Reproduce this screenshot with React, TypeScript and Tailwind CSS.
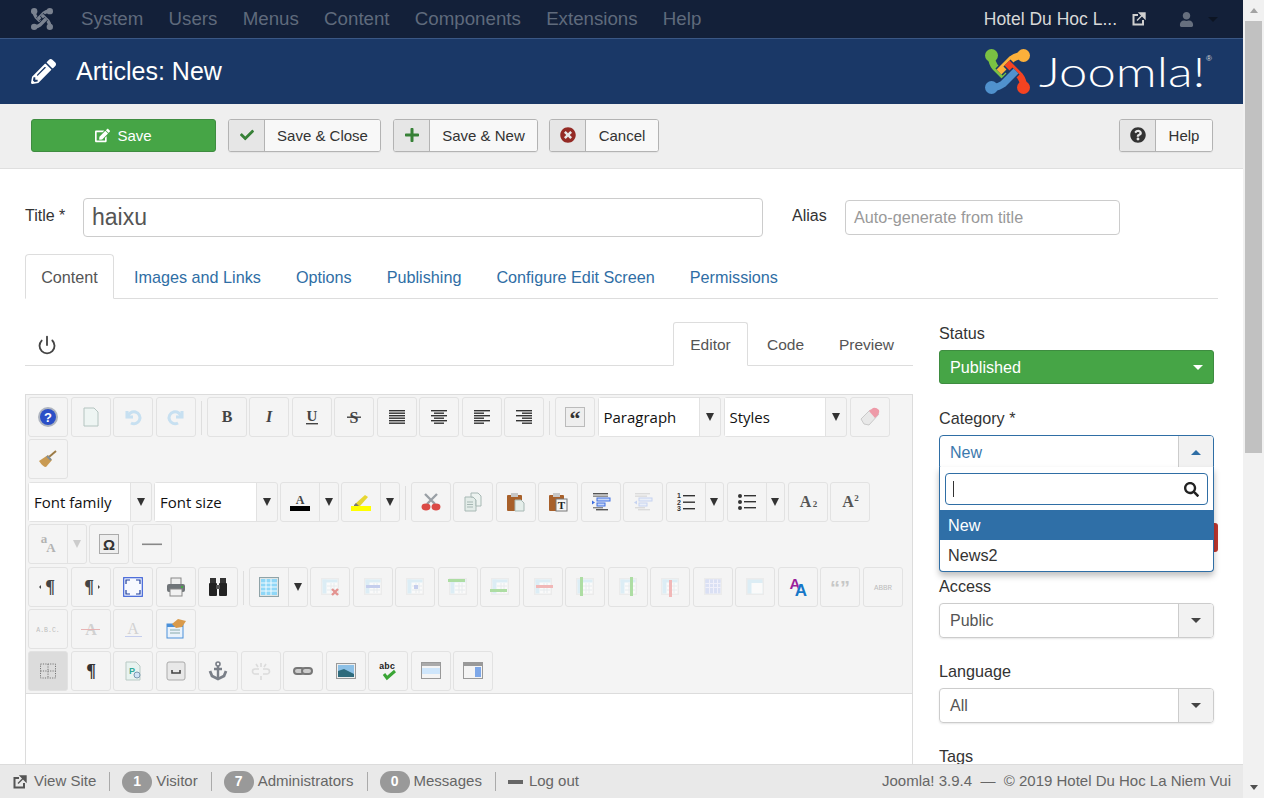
import type { ReactNode } from "react";
import { FaCheck, FaEdit, FaPencilAlt, FaPlus, FaQuestionCircle, FaSearch, FaTimesCircle, FaUser } from "react-icons/fa";
import { Power } from "lucide-react";

const SANS = "font-['Liberation_Sans',Arial,sans-serif]";

const NAV = ["System", "Users", "Menus", "Content", "Components", "Extensions", "Help"];

function JoomlaMark({ colors, size, gap }: { colors: string[]; size: number; gap: string }) {
  return (
    <svg width={size} height={size} viewBox="0 0 45 45">
      {colors.map((c, i) => (
        <g key={i} transform={`rotate(${i * 90} 22.5 22.5)`}>
          <path d="M9 17 L23 31" fill="none" stroke={gap} strokeWidth="10" />
          <circle cx="6.5" cy="6.5" r="6.5" fill={c} />
          <path d="M6 7 Q7 14 10 18 L23 31" fill="none" stroke={c} strokeWidth="7" />
        </g>
      ))}
    </svg>
  );
}

function OutIcon({ className }: { className?: string }) {
  return (
    <svg viewBox="0 0 14 14" className={className}>
      <path d="M6 3H1.5v9.5H11V8" fill="none" stroke="currentColor" strokeWidth="2" />
      <path d="M5 8.5L10 3.5M7.5 1H13v5.5z" fill="currentColor" stroke="currentColor" strokeWidth="1.4" />
    </svg>
  );
}

// horizontal text lines, used by the align / list / indent buttons
function Lines({ rows, color = "#333" }: { rows: [number, number, number][]; color?: string }) {
  return (
    <>
      {rows.map(([x, y, w], i) => (
        <rect key={i} x={x} y={y} width={w} height="1.4" fill={color} />
      ))}
    </>
  );
}

function Txt({ children, x = 10, y = 15, size = 15, fill = "#444", family = "Liberation Serif", weight = 700, italic = false }: {
  children: ReactNode; x?: number; y?: number; size?: number; fill?: string; family?: string; weight?: number; italic?: boolean;
}) {
  return (
    <text x={x} y={y} fontSize={size} fill={fill} fontFamily={family} fontWeight={weight} fontStyle={italic ? "italic" : "normal"} textAnchor="middle">
      {children}
    </text>
  );
}

function TableBase({ children, tint = "#cdeaf7" }: { children?: ReactNode; tint?: string }) {
  return (
    <>
      <rect x="1" y="1" width="18" height="17" fill="#e6e6e6" />
      <rect x="2.5" y="2.5" width="15" height="14" fill="#fff" />
      <rect x="2.5" y="2.5" width="15" height="3" fill={tint} />
      <rect x="2.5" y="2.5" width="4" height="14" fill={tint} />
      <path d="M7 9h10M7 13h10M11 6v10M14 6v10" stroke="#dfe6ea" strokeWidth="1" />
      {children}
    </>
  );
}

const ICONS: Record<string, ReactNode> = {
  help: (
    <>
      <circle cx="10" cy="10" r="10" fill="#aeb4bf" />
      <circle cx="10" cy="10" r="8" fill="#2b4fc7" />
      <Txt y={14.5} size={13} fill="#fff" family="Liberation Sans">?</Txt>
    </>
  ),
  newdoc: <path d="M3 1h10l4 4v14H3z" fill="#eef5f3" stroke="#b4c4c0" />,
  undo: <path d="M4 4v6h6M5 10a6 6 0 1 1 3 6" fill="none" stroke="#a9d2ee" strokeWidth="3" />,
  redo: <path d="M16 4v6h-6M15 10a6 6 0 1 0-3 6" fill="none" stroke="#a9d2ee" strokeWidth="3" />,
  bold: <Txt y={15} size={16}>B</Txt>,
  italic: <Txt y={15} size={16} italic>I</Txt>,
  underline: (<><Txt y={13.5} size={15}>U</Txt><rect x="4" y="16" width="12" height="1.4" fill="#444" /></>),
  strike: (<><Txt y={15.5} size={16}>S</Txt><rect x="3" y="9.5" width="14" height="1.4" fill="#444" /></>),
  justify: <Lines rows={[[2, 3, 16], [2, 5.5, 16], [2, 8, 16], [2, 10.5, 16], [2, 13, 16], [2, 15.5, 16]]} />,
  center: <Lines rows={[[2, 3, 16], [5, 5.5, 10], [2, 8, 16], [5, 10.5, 10], [2, 13, 16], [5, 15.5, 10]]} />,
  left: <Lines rows={[[2, 3, 16], [2, 5.5, 10], [2, 8, 16], [2, 10.5, 10], [2, 13, 16], [2, 15.5, 10]]} />,
  right: <Lines rows={[[2, 3, 16], [8, 5.5, 10], [2, 8, 16], [8, 10.5, 10], [2, 13, 16], [8, 15.5, 10]]} />,
  quote: (
    <>
      <rect x="0.5" y="0.5" width="19" height="19" fill="#eee" stroke="#bbb" />
      <Txt y={19} size={22} fill="#333">“</Txt>
    </>
  ),
  eraser: (
    <>
      <path d="M1 12 L10 3 L19 7 L9 18 L4 17z" fill="#e8e8e8" stroke="#c9c9c9" />
      <path d="M9 4 L13 1 Q16 0 19 3 Q20 5 18 8 L15 11z" fill="#ee9aa8" />
    </>
  ),
  broom: (
    <>
      <path d="M11 8L18 2" stroke="#9c7b46" strokeWidth="2" />
      <path d="M1 12 L10 6 L14 11 L8 18 Q5 18 1 12z" fill="#c99a52" />
      <path d="M9 7L13 11" stroke="#7d8d99" strokeWidth="2" />
    </>
  ),
  forecolor: (<><Txt y={12} size={12}>A</Txt><rect x="0" y="14" width="20" height="5" fill="#000" /></>),
  hilite: (
    <>
      <path d="M4 12L14 3l3 2-8 9-4 0z" fill="#e7d630" />
      <path d="M3 13l2-2 3 3H3z" fill="#777" />
      <rect x="0" y="14" width="20" height="5" fill="#ff0" />
    </>
  ),
  cut: (
    <>
      <path d="M4 2L14 12M16 2L6 12" stroke="#9aa0a6" strokeWidth="2.4" />
      <ellipse cx="5" cy="15" rx="4.5" ry="3.4" fill="#db4a46" />
      <ellipse cx="15" cy="15" rx="4.5" ry="3.4" fill="#db4a46" />
    </>
  ),
  copy: (
    <>
      <path d="M2 5h8l3 3v11H2z" fill="#e3ece8" stroke="#a7b8b4" />
      <path d="M8 1h7l3 3v10h-5V8l-3-3H8z" fill="#edf3f0" stroke="#a7b8b4" />
      <path d="M4 10h6M4 12.5h6M4 15h6" stroke="#a7b8b4" />
    </>
  ),
  paste: (
    <>
      <rect x="1" y="3" width="15" height="16" rx="1" fill="#a8602a" />
      <rect x="5" y="1" width="7" height="4" fill="#c7c7c7" />
      <path d="M9 8h6l3 3v8H9z" fill="#e5eeea" stroke="#a7b8b4" />
    </>
  ),
  pastetext: (
    <>
      <rect x="1" y="3" width="15" height="16" rx="1" fill="#a8602a" />
      <rect x="5" y="1" width="7" height="4" fill="#c7c7c7" />
      <rect x="8" y="7" width="11" height="12" fill="#f5f5f5" stroke="#777" />
      <Txt x={13.5} y={17} size={11} fill="#222">T</Txt>
    </>
  ),
  indent: (
    <>
      <Lines rows={[[2, 1, 15], [5, 17, 12]]} color="#555" />
      <Lines rows={[[2, 3.5, 15], [2, 15, 10]]} color="#888" />
      <rect x="6" y="6" width="13" height="3" fill="#c8d8f7" stroke="#3e6ee0" />
      <rect x="6" y="11" width="8" height="3" fill="#c8d8f7" stroke="#3e6ee0" />
      <path d="M1 8.5l3 2-3 2z" fill="#3e6ee0" />
    </>
  ),
  outdent: (
    <>
      <Lines rows={[[2, 1, 15], [2, 3.5, 12], [2, 15, 10], [5, 17, 12]]} color="#ccc" />
      <rect x="6" y="6" width="13" height="3" fill="#e4ecfb" stroke="#a9bef0" />
      <rect x="6" y="11" width="8" height="3" fill="#e4ecfb" stroke="#a9bef0" />
      <path d="M4 8.5l-3 2 3 2z" fill="#a9bef0" />
    </>
  ),
  numlist: (
    <>
      <Txt x={3} y={6} size={7} family="Liberation Sans" fill="#333">1</Txt>
      <Txt x={3} y={12.5} size={7} family="Liberation Sans" fill="#333">2</Txt>
      <Txt x={3} y={19} size={7} family="Liberation Sans" fill="#333">3</Txt>
      <Lines rows={[[7, 3, 12], [7, 9.5, 12], [7, 16, 12]]} />
    </>
  ),
  bullist: (
    <>
      <circle cx="3" cy="4" r="2" fill="#333" />
      <circle cx="3" cy="10" r="2" fill="#333" />
      <circle cx="3" cy="16" r="2" fill="#333" />
      <Lines rows={[[7, 3, 12], [7, 9, 12], [7, 15, 12]]} />
    </>
  ),
  sub: (<><Txt x={7.5} y={15} size={16} fill="#555">A</Txt><Txt x={17} y={15} size={9} fill="#555">2</Txt></>),
  sup: (<><Txt x={8} y={15} size={16} fill="#555">A</Txt><Txt x={16.5} y={9} size={9} fill="#555">2</Txt></>),
  translate: (<><Txt x={6} y={9} size={13} fill="#888">a</Txt><Txt x={13} y={18} size={13} fill="#888">A</Txt></>),
  omega: (
    <>
      <rect x="0.5" y="0.5" width="19" height="19" fill="#eee" stroke="#aaa" />
      <Txt y={15.5} size={15} fill="#333" family="Liberation Sans">Ω</Txt>
    </>
  ),
  hr: <rect x="0" y="9.5" width="20" height="1.6" fill="#888" />,
  ltr: (<><path d="M1 10l2-2v4z" fill="#444" /><Txt x={12} y={16} size={18}>¶</Txt></>),
  rtl: (<><path d="M19 10l-2-2v4z" fill="#444" /><Txt x={8} y={16} size={18}>¶</Txt></>),
  fullscreen: (
    <>
      <rect x="0.7" y="0.7" width="18.6" height="18.6" fill="#f7f9ff" stroke="#3e62d8" strokeWidth="1.2" />
      <path d="M3 7V3h4M13 3h4v4M17 13v4h-4M7 17H3v-4" fill="none" stroke="#1e3e9c" strokeWidth="1.2" />
    </>
  ),
  print: (
    <>
      <rect x="5" y="1" width="10" height="7" fill="#eee" stroke="#888" />
      <rect x="1" y="7" width="18" height="8" rx="2" fill="#6f7478" />
      <rect x="4" y="12" width="12" height="7" fill="#f2f2f2" stroke="#888" />
      <circle cx="16" cy="10" r="1" fill="#3b3" />
    </>
  ),
  search: (
    <>
      <rect x="2" y="1" width="6" height="6" fill="#333" />
      <rect x="12" y="1" width="6" height="6" fill="#333" />
      <rect x="1" y="6" width="8" height="13" rx="1" fill="#222" />
      <rect x="11" y="6" width="8" height="13" rx="1" fill="#222" />
      <rect x="8" y="8" width="4" height="4" fill="#555" />
    </>
  ),
  table: (
    <>
      <rect x="0.5" y="0.5" width="19" height="19" fill="#dfe5e5" stroke="#8fa3a8" />
      <rect x="2" y="2" width="16" height="16" fill="#8fd7f7" />
      <path d="M2 6h16M2 10h16M2 14h16M7 2v16M12 2v16" stroke="#f1fbff" strokeWidth="1" />
    </>
  ),
  tdelete: <TableBase><path d="M12 12l6 6M18 12l-6 6" stroke="#d9534f" strokeWidth="2.4" /></TableBase>,
  tprops: <TableBase><rect x="3" y="8" width="14" height="3" fill="#a6b5ea" /></TableBase>,
  tcell: <TableBase><rect x="9" y="8" width="4" height="4" fill="#a6b5ea" /></TableBase>,
  tins1: <TableBase><rect x="0" y="2" width="17" height="3" fill="#7fcf6f" /></TableBase>,
  tins2: <TableBase><rect x="0" y="12" width="17" height="3" fill="#7fcf6f" /></TableBase>,
  tdel1: <TableBase><rect x="3" y="8" width="17" height="3" fill="#f08f8f" /></TableBase>,
  tcol1: <TableBase><rect x="5" y="0" width="3" height="19" fill="#7fcf6f" /></TableBase>,
  tcol2: <TableBase><rect x="12" y="0" width="3" height="19" fill="#7fcf6f" /></TableBase>,
  tcol3: <TableBase><rect x="9" y="3" width="3" height="17" fill="#f08f8f" /></TableBase>,
  tmerge: (
    <TableBase tint="#c9d4f4">
      <rect x="2.5" y="2.5" width="15" height="14" fill="#c9d4f4" />
      <path d="M2.5 6.5h15M2.5 10.5h15M6.5 2.5v14M10.5 2.5v14M14.5 2.5v14" stroke="#eef" strokeWidth="1" />
    </TableBase>
  ),
  tsplit: (
    <>
      <rect x="1" y="1" width="18" height="17" fill="#e6e6e6" />
      <rect x="2.5" y="2.5" width="15" height="14" fill="#cdeaf7" />
      <rect x="6.5" y="6" width="11" height="10.5" fill="#fff" />
    </>
  ),
  styleprops: (
    <>
      <Txt x={7} y={12} size={15} fill="#9b1f9b" family="Liberation Sans">A</Txt>
      <Txt x={13} y={19} size={17} fill="#1677c8" family="Liberation Sans">A</Txt>
    </>
  ),
  cite: <Txt y={18} size={20} fill="#aaa" family="Liberation Sans">“”</Txt>,
  abbr: <Txt y={13} size={7.5} fill="#999" family="Liberation Mono" weight={400}>ABBR</Txt>,
  acronym: <Txt y={13} size={6.5} fill="#999" family="Liberation Mono" weight={400}>A.B.C.</Txt>,
  del: (<><Txt y={16} size={16} fill="#bbb">A</Txt><rect x="0" y="10" width="19" height="1" fill="#e08a8a" /></>),
  ins: (<><Txt y={15} size={16} fill="#bbb" weight={400}>A</Txt><rect x="2" y="17" width="17" height="1" fill="#a6b5ea" /></>),
  template: (
    <>
      <rect x="1" y="5" width="16" height="14" fill="#e9f2fb" stroke="#4a90d9" />
      <rect x="1" y="5" width="16" height="3" fill="#4a90d9" />
      <path d="M4 11h10M4 14h10" stroke="#8aa" />
      <path d="M6 5l6-5 8 2-4 6-6 1z" fill="#d99a4b" />
    </>
  ),
  blocks: <path d="M2.5 3h15v14h-15zM10 3v14M2.5 10h15" fill="none" stroke="#777" strokeDasharray="1.2 1.2" />,
  para: <Txt y={16} size={18} fill="#333">¶</Txt>,
  preview: (
    <>
      <path d="M3 1h10l4 4v14H3z" fill="#e8f3f0" stroke="#b9cac5" />
      <Txt x={9} y={13} size={9} fill="#3a9" family="Liberation Sans">P</Txt>
      <circle cx="14" cy="14" r="3" fill="#cfe3f5" stroke="#7a97b0" />
    </>
  ),
  pagebreak: (
    <>
      <rect x="1" y="1" width="18" height="18" rx="2" fill="#e8e8e8" stroke="#aaa" />
      <path d="M6 9v3h8V9" fill="none" stroke="#444" strokeWidth="1.6" />
    </>
  ),
  anchor: (
    <>
      <circle cx="10" cy="3" r="2" fill="none" stroke="#7a7f88" strokeWidth="1.6" />
      <path d="M10 5v12M6 8h8" stroke="#7a7f88" strokeWidth="2.4" />
      <path d="M2 10l2 5 6 3 6-3 2-5" fill="none" stroke="#7a7f88" strokeWidth="2.8" />
    </>
  ),
  unlink: <path d="M8 8H4a2 2 0 0 0 0 5h4M12 8h4a2 2 0 0 1 0 5h-4M10 2v4M10 15v4M5 3l2 3M15 3l-2 3" fill="none" stroke="#ccc" strokeWidth="1.6" />,
  link: (
    <>
      <rect x="1" y="7" width="10" height="6" rx="3" fill="#ccc" stroke="#777" strokeWidth="2" />
      <rect x="9" y="7" width="10" height="6" rx="3" fill="#ccc" stroke="#777" strokeWidth="2" />
    </>
  ),
  image: (
    <>
      <rect x="0.5" y="2.5" width="19" height="15" fill="#eee" stroke="#999" />
      <rect x="2" y="4" width="16" height="12" fill="#8cc0e6" />
      <path d="M2 10l6-2 10 5v3H2z" fill="#2f6b7c" />
    </>
  ),
  spell: (
    <>
      <Txt x={9} y={8} size={9} fill="#222" family="Liberation Mono">abc</Txt>
      <path d="M6 13l3 4 8-7" fill="none" stroke="#3aa535" strokeWidth="3" />
    </>
  ),
  wide: (
    <>
      <rect x="0.5" y="1.5" width="19" height="16" fill="#f4f4f4" stroke="#999" />
      <rect x="1" y="2" width="18" height="3" fill="#aaa" />
      <rect x="1" y="7" width="18" height="6" fill="#cfe6fb" />
    </>
  ),
  sidebar: (
    <>
      <rect x="0.5" y="1.5" width="19" height="16" fill="#f4f4f4" stroke="#999" />
      <rect x="1" y="2" width="18" height="3" fill="#999" />
      <rect x="12" y="6" width="6" height="10" fill="#7da7e8" />
    </>
  ),
};

const DIMMED = new Set(["undo", "redo", "tdelete", "tprops", "tcell", "tins1", "tins2", "tdel1", "tcol1", "tcol2", "tcol3", "tmerge", "tsplit", "cite", "abbr", "acronym", "del", "ins", "unlink", "outdent", "translate"]);

function Icon({ name }: { name: string }) {
  return (
    <svg width="20" height="20" viewBox="0 0 20 20" className={`overflow-visible ${DIMMED.has(name) ? "opacity-60" : ""}`}>
      {ICONS[name]}
    </svg>
  );
}

function Btn({ name, active }: { name: string; active?: boolean }) {
  return (
    <div className={`w-10 h-10 shrink-0 flex items-center justify-center rounded-[3px] border border-[#e2e2e2] ${active ? "bg-[#dcdcdc]" : ""}`}>
      <Icon name={name} />
    </div>
  );
}

function Split({ name, w = 58.5, faded }: { name: string; w?: number; faded?: boolean }) {
  return (
    <div className="h-10 shrink-0 flex rounded-[3px] border border-[#e2e2e2]" style={{ width: w }}>
      <div className="w-[39px] flex items-center justify-center border-r border-[#e2e2e2]">
        <Icon name={name} />
      </div>
      <div className="flex-1 flex items-center justify-center">
        <Arrow faded={faded} />
      </div>
    </div>
  );
}

function Arrow({ faded }: { faded?: boolean }) {
  return <div className={`w-0 h-0 border-x-[4.5px] border-x-transparent border-t-[8px] ${faded ? "border-t-[#ccc]" : "border-t-[#333]"}`} />;
}

function Select({ label, w = 123.5 }: { label: string; w?: number }) {
  return (
    <div className="h-10 shrink-0 flex rounded-[3px] border border-[#e2e2e2]" style={{ width: w }}>
      <div className="flex-1 bg-white h-[38px] px-[5px] flex items-center text-[15px] text-[#111] font-['Open_Sans',sans-serif]">{label}</div>
      <div className="w-[21px] border-l border-[#e2e2e2] flex items-center justify-center">
        <Arrow />
      </div>
    </div>
  );
}

function Sep() {
  return <div className="w-px h-[34px] bg-[#dedede] mx-[2.5px] self-center shrink-0" />;
}

function Row({ children }: { children: ReactNode }) {
  return <div className="flex gap-[2.5px] h-[42.4px] pl-[2px] items-start">{children}</div>;
}

function ChosenField({ value, open }: { value: string; open?: boolean }) {
  return (
    <div className={`h-[35px] flex rounded-[4px] border overflow-hidden ${open ? "border-[#2f6ea5]" : "border-[#ccc] shadow-[0_1px_2px_rgba(0,0,0,0.1)]"}`}>
      <div className={`flex-1 px-[10px] flex items-center text-[16px] ${open ? "text-[#3b78ad]" : "text-[#555]"}`}>{value}</div>
      <div className="w-[35px] border-l border-[#ccc] bg-[#f2f2f2] flex items-center justify-center">
        <div className={`w-0 h-0 border-x-[5px] border-x-transparent ${open ? "border-b-[5px] border-b-[#2f6ea5]" : "border-t-[5px] border-t-[#444]"}`} />
      </div>
    </div>
  );
}

function ToolBtn({ icon, label, w }: { icon: ReactNode; label: string; w: number }) {
  return (
    <div className="h-[33px] flex rounded-[3px] border border-[#b3b3b3] bg-white text-[#333] text-[15px] shadow-[0_1px_1px_rgba(0,0,0,0.05)] overflow-hidden" style={{ width: w }}>
      <div className="w-[36px] bg-[#e6e6e6] border-r border-[#b3b3b3] flex items-center justify-center shrink-0">{icon}</div>
      <div className="flex-1 flex items-center justify-center bg-[#f8f8f8] pt-[2px]">{label}</div>
    </div>
  );
}

function Stat({ n, label }: { n: number; label: string }) {
  return (
    <>
      <span className="w-px h-[19px] bg-[#aaa] ml-[13px] mr-[12px]" />
      <span className="w-[30px] h-[22px] rounded-full bg-[#999] text-white font-bold text-[14px] flex items-center justify-center mr-[4px]">{n}</span>
      <span>{label}</span>
    </>
  );
}

export default function App() {
  return (
    <div className={`h-[798px] w-[1264px] flex overflow-hidden bg-white ${SANS}`}>
      <div className="w-[1243px] flex flex-col shrink-0">
        {/* Top menu */}
        <div className="h-[39px] shrink-0 bg-[#132039] border-b border-[#3a5785] flex items-center pl-[31px] pr-[25px]">
          <JoomlaMark size={22} gap="#132039" colors={["#7a8290", "#7a8290", "#7a8290", "#7a8290"]} />
          <div className="flex gap-[25.3px] ml-[28px] text-[#5f6a7c] text-[18.7px]">
            {NAV.map((n) => (
              <span key={n}>{n}</span>
            ))}
          </div>
          <span className="ml-auto text-[#d8d8d8] text-[17.5px]">Hotel Du Hoc L...</span>
          <OutIcon className="w-[14px] h-[14px] ml-[15px] text-[#cfcfcf]" />
          <FaUser className="ml-[33px] text-[#666f7e] text-[15px]" />
          <div className="ml-[14px] w-0 h-0 border-x-[5px] border-x-transparent border-t-[5px] border-t-[#0c1423]" />
        </div>

        {/* Title bar */}
        <div className="h-[65px] shrink-0 bg-[#1a3867] flex items-center pl-[31px] pr-[31px] text-white">
          <FaPencilAlt className="text-[25px]" />
          <h1 className="ml-[20px] text-[25px] leading-none">Articles: New</h1>
          <div className="ml-auto flex items-center">
            <JoomlaMark size={45} gap="#1a3867" colors={["#7ac143", "#fbb03b", "#f44321", "#5091cd"]} />
            <div className="ml-[9px] w-[167px] mt-[2px]">
              <span className="inline-block origin-left scale-x-[1.24] whitespace-nowrap text-[41px] leading-none font-['Lato',sans-serif] font-light text-white">Joomla!</span>
            </div>
            <span className="self-start text-[8px] text-[#ddd] mt-[4px]">®</span>
          </div>
        </div>

        {/* Action toolbar */}
        <div className="h-[65px] shrink-0 bg-[#efefef] border-b border-[#dfdfdf] flex items-center pl-[31px] pr-[30px] pb-[2px] gap-3">
          <div className="w-[185px] h-[33px] rounded-[3px] border border-[#3e8c40] bg-[#46a546] text-white text-[15px] flex items-center justify-center gap-[7px]">
            <FaEdit className="text-[15px]" />
            <span className="pt-[2px]">Save</span>
          </div>
          <ToolBtn w={153} label="Save & Close" icon={<FaCheck className="text-[#378137] text-[14px]" />} />
          <ToolBtn w={145} label="Save & New" icon={<FaPlus className="text-[#378137] text-[16px]" />} />
          <div className="-ml-px">
            <ToolBtn w={110} label="Cancel" icon={<FaTimesCircle className="text-[#942a25] text-[16px]" />} />
          </div>
          <div className="ml-auto">
            <ToolBtn w={94} label="Help" icon={<FaQuestionCircle className="text-[#333] text-[16px]" />} />
          </div>
        </div>

        {/* Form */}
        <div className="flex-1 min-h-0 overflow-hidden pl-[25px] pr-[25px] pt-[28px] text-[#333]">
          <div className="flex items-center h-[41px]">
            <label className="w-[58px] text-[16px] -mt-[4px]">Title *</label>
            <div className="w-[680px] h-[39px] border border-[#ccc] rounded-[4px] px-2 flex items-center text-[23px] text-[#555]">haixu</div>
            <label className="ml-[29px] w-[53px] text-[16px] -mt-[4px]">Alias</label>
            <div className="w-[275px] h-[35px] border border-[#ccc] rounded-[4px] px-2 flex items-center text-[16.2px] text-[#999]">Auto-generate from title</div>
          </div>

          <div className="mt-[16px] h-[45px] flex border-b border-[#ddd] text-[16.2px] text-[#2f6ea5]">
            <div className="w-[89px] h-[45px] border border-[#ddd] border-b-white rounded-t-[4px] bg-white text-[#555] flex items-center justify-center pt-[1px]">Content</div>
            <div className="flex items-center gap-[35px] ml-[20px] pt-[2px]">
              <span>Images and Links</span>
              <span>Options</span>
              <span>Publishing</span>
              <span>Configure Edit Screen</span>
              <span>Permissions</span>
            </div>
          </div>

          <div className="flex mt-[23px]">
            <div className="w-[888px] shrink-0">
              {/* Editor tabs */}
              <div className="h-[44px] flex items-end border-b border-[#ddd] relative">
                <Power className="ml-[12px] mb-[10px] w-[20px] h-[20px] text-[#444]" strokeWidth={2.2} />
                <div className="ml-auto flex text-[15.5px] text-[#555] pr-[3px] mb-[-1px]">
                  <div className="w-[75px] h-[44px] border border-[#ddd] border-b-white rounded-t-[3px] bg-white flex items-center justify-center pt-[1px]">Editor</div>
                  <div className="w-[75px] h-[44px] flex items-center justify-center pt-[2px]">Code</div>
                  <div className="w-[87px] h-[44px] flex items-center justify-center pt-[2px]">Preview</div>
                </div>
              </div>

              {/* TinyMCE */}
              <div className="mt-[28px] border border-[#dcdcdc]">
                <div className="bg-[#f4f4f4] pt-[2px] border-b border-[#dcdcdc] h-[299px]">
                  <Row>
                    {["help", "newdoc", "undo", "redo"].map((n) => <Btn key={n} name={n} />)}
                    <Sep />
                    {["bold", "italic", "underline", "strike", "justify", "center", "left", "right"].map((n) => <Btn key={n} name={n} />)}
                    <Sep />
                    <Btn name="quote" />
                    <Select label="Paragraph" />
                    <Select label="Styles" />
                    <Btn name="eraser" />
                  </Row>
                  <Row>
                    <Btn name="broom" />
                  </Row>
                  <Row>
                    <Select label="Font family" />
                    <Select label="Font size" />
                    <Split name="forecolor" />
                    <Split name="hilite" />
                    <Sep />
                    {["cut", "copy", "paste", "pastetext", "indent", "outdent"].map((n) => <Btn key={n} name={n} />)}
                    <Split name="numlist" />
                    <Split name="bullist" />
                    <Btn name="sub" />
                    <Btn name="sup" />
                  </Row>
                  <Row>
                    <Split name="translate" faded />
                    <Btn name="omega" />
                    <Btn name="hr" />
                  </Row>
                  <Row>
                    {["ltr", "rtl", "fullscreen", "print", "search"].map((n) => <Btn key={n} name={n} />)}
                    <Sep />
                    <Split name="table" />
                    {["tdelete", "tprops", "tcell", "tins1", "tins2", "tdel1", "tcol1", "tcol2", "tcol3", "tmerge", "tsplit", "styleprops", "cite", "abbr"].map((n) => <Btn key={n} name={n} />)}
                  </Row>
                  <Row>
                    {["acronym", "del", "ins", "template"].map((n) => <Btn key={n} name={n} />)}
                  </Row>
                  <Row>
                    <Btn name="blocks" active />
                    {["para", "preview", "pagebreak", "anchor", "unlink", "link", "image", "spell", "wide", "sidebar"].map((n) => <Btn key={n} name={n} />)}
                  </Row>
                </div>
                <div className="h-[100px] bg-white" />
              </div>
            </div>

            {/* Side column */}
            <div className="ml-[26px] w-[275px] shrink-0 text-[16.2px] relative">
              <div className="h-[21px] mt-[1px] flex items-center">Status</div>
              <div className="mt-[6px] h-[34px] rounded-[3px] bg-[#46a546] border border-[#3e8c40] text-white flex items-center justify-between px-[10px]">
                Published
                <span className="w-0 h-0 border-x-[5px] border-x-transparent border-t-[5px] border-t-white" />
              </div>
              <div className="mt-[24px] h-[21px] flex items-center">Category *</div>
              <div className="mt-[6px] relative z-10">
                <ChosenField value="New" open />
                <div className="absolute left-0 right-0 top-[32px] h-[105px] bg-white border border-t-0 border-[#2f6ea5] rounded-b-[4px] shadow-[0_4px_6px_rgba(0,0,0,0.25)]">
                  <div className="mx-[5px] mt-[6px] h-[32px] border border-[#2f6ea5] rounded-[4px] flex items-center justify-between pl-[7px] pr-[8px]">
                    <span className="w-px h-[16px] bg-[#333]" />
                    <FaSearch className="text-[#222] text-[15px]" />
                  </div>
                  <div className="mt-[5px] h-[30px] bg-[#2f6fa7] text-white flex items-center px-[8px]">New</div>
                  <div className="h-[31px] flex items-center px-[8px]">News2</div>
                </div>
              </div>
              {/* Featured toggle, mostly hidden under the open list */}
              <div className="mt-[53px] h-[29px] -mr-[4px] ml-auto w-[60px] rounded-[3px] bg-[#bd362f]" />
              <div className="mt-[24px] h-[21px] flex items-center">Access</div>
              <div className="mt-[6px]"><ChosenField value="Public" /></div>
              <div className="mt-[23px] h-[21px] flex items-center">Language</div>
              <div className="mt-[6px]"><ChosenField value="All" /></div>
              <div className="mt-[23px] h-[21px] flex items-center">Tags</div>
            </div>
          </div>
        </div>

        {/* Status bar */}
        <div className="h-[34px] shrink-0 bg-[#e9e9e9] border-t border-[#dcdcdc] flex items-center pl-[13px] pr-[12px] text-[15px] text-[#666]">
          <OutIcon className="w-[14px] h-[14px] mr-[7px] text-[#555]" />
          <span>View Site</span>
          <Stat n={1} label="Visitor" />
          <Stat n={7} label="Administrators" />
          <Stat n={0} label="Messages" />
          <span className="w-px h-[19px] bg-[#aaa] ml-[13px] mr-[12px]" />
          <span className="w-[15px] h-[4px] bg-[#666] mr-[6px]" />
          <span>Log out</span>
          <span className="ml-auto">Joomla! 3.9.4 &nbsp;— &nbsp;© 2019 Hotel Du Hoc La Niem Vui</span>
        </div>
      </div>

      {/* Browser scrollbar */}
      <div className="w-[21px] bg-[#f1f1f1] flex flex-col items-center shrink-0 px-[2px]">
        <div className="h-[21px] flex items-center">
          <div className="w-0 h-0 border-x-[4.5px] border-x-transparent border-b-[5px] border-b-[#a3a3a3]" />
        </div>
        <div className="w-full h-[432px] bg-[#c1c1c1]" />
        <div className="mt-auto h-[21px] flex items-center">
          <div className="w-0 h-0 border-x-[4.5px] border-x-transparent border-t-[5px] border-t-[#505050]" />
        </div>
      </div>
    </div>
  );
}
